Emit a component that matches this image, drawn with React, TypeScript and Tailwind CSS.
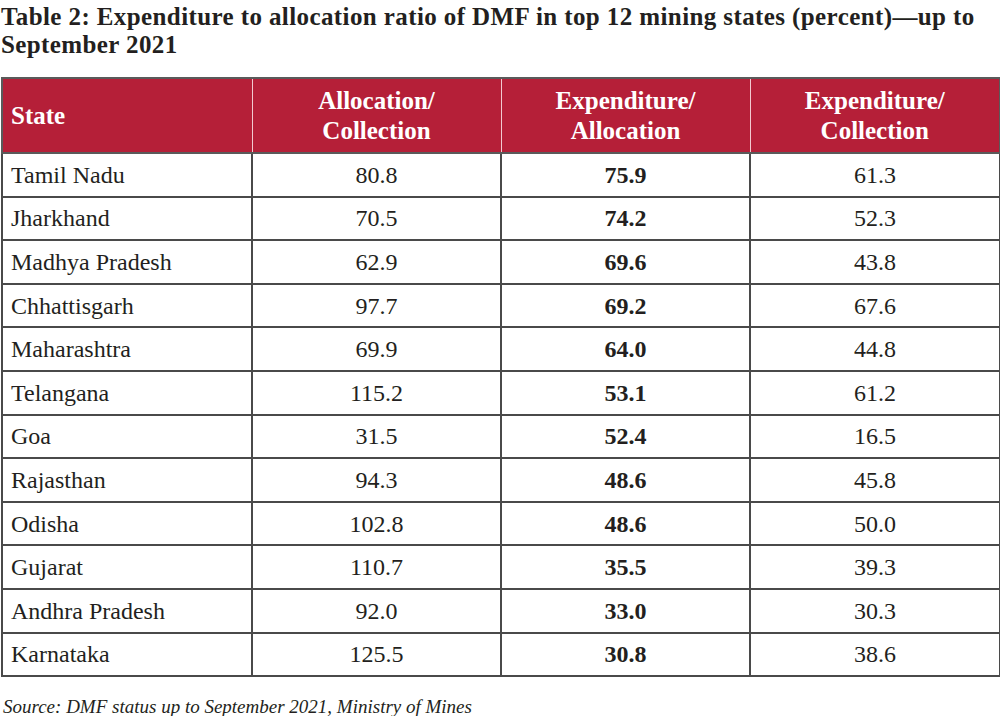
const rows: [string, string, string, string][] = [
  ["Tamil Nadu", "80.8", "75.9", "61.3"],
  ["Jharkhand", "70.5", "74.2", "52.3"],
  ["Madhya Pradesh", "62.9", "69.6", "43.8"],
  ["Chhattisgarh", "97.7", "69.2", "67.6"],
  ["Maharashtra", "69.9", "64.0", "44.8"],
  ["Telangana", "115.2", "53.1", "61.2"],
  ["Goa", "31.5", "52.4", "16.5"],
  ["Rajasthan", "94.3", "48.6", "45.8"],
  ["Odisha", "102.8", "48.6", "50.0"],
  ["Gujarat", "110.7", "35.5", "39.3"],
  ["Andhra Pradesh", "92.0", "33.0", "30.3"],
  ["Karnataka", "125.5", "30.8", "38.6"],
];

export default function App() {
  return (
    <div className="w-[1000px] h-[716px] bg-white text-[#231f20] font-['Liberation_Serif',serif]">
      <h1 className="pl-[1px] pt-[3px] text-[25px] leading-[28px] font-bold tracking-[0.4px]">
        Table 2: Expenditure to allocation ratio of DMF in top 12 mining states (percent)—up to
        <br />
        September 2021
      </h1>

      <table className="mt-[18px] ml-[1px] w-[998px] border-collapse table-fixed">
        <colgroup>
          <col className="w-[250px]" />
          <col className="w-[249px]" />
          <col className="w-[249px]" />
          <col className="w-[250px]" />
        </colgroup>
        <thead>
          <tr className="h-[75px] bg-[#b51f38] text-white text-[25px] leading-[30px] font-bold">
            <th className="border-2 border-[#5a5a5a] border-r-[#f2c9d0] border-r pl-[8px] text-left">State</th>
            <th className="border-y-2 border-[#5a5a5a] border-r border-r-[#f2c9d0] text-center">
              Allocation/
              <br />
              Collection
            </th>
            <th className="border-y-2 border-[#5a5a5a] border-r border-r-[#f2c9d0] text-center">
              Expenditure/
              <br />
              Allocation
            </th>
            <th className="border-2 border-[#5a5a5a] border-l-0 text-center">
              Expenditure/
              <br />
              Collection
            </th>
          </tr>
        </thead>
        <tbody className="text-[24px]">
          {rows.map(([state, a, b, c]) => (
            <tr key={state} className="h-[43.6px]">
              <td className="border-2 border-[#4a4a4a] pl-[8px] text-left">{state}</td>
              <td className="border-2 border-[#4a4a4a] text-center">{a}</td>
              <td className="border-2 border-[#4a4a4a] text-center font-bold">{b}</td>
              <td className="border-2 border-[#4a4a4a] text-center">{c}</td>
            </tr>
          ))}
        </tbody>
      </table>

      <p className="mt-[16px] pl-[3px] text-[19px] italic">
        Source: DMF status up to September 2021, Ministry of Mines
      </p>
    </div>
  );
}
